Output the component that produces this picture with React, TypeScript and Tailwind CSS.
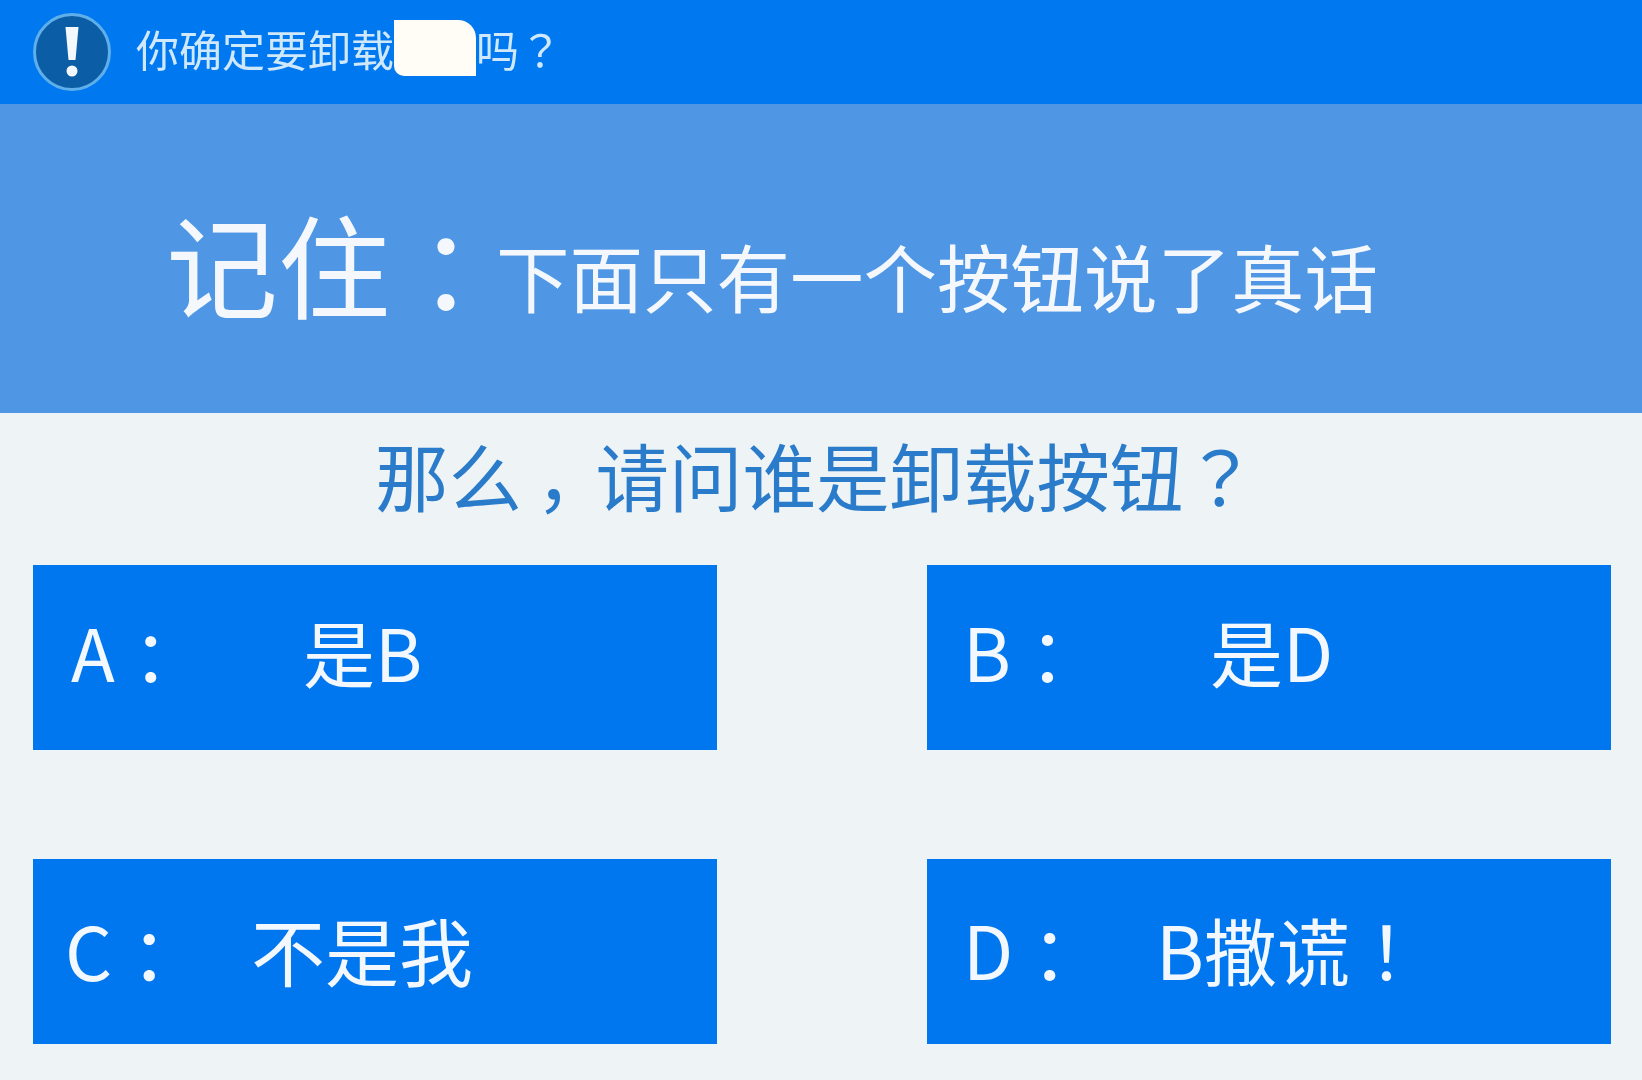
const font = "font-['Noto_Sans_CJK_SC','Noto_Sans',sans-serif]";

// TC cut of the font centres the full-width punctuation like the screenshot
const Punct = ({ children }: { children: string }) => (
  <span className="font-['Noto_Sans_CJK_TC',sans-serif]">{children}</span>
);

// the colon sits a little lower in the picture
const Colon = () => (
  <span className="inline-block translate-y-[0.05em] font-['Noto_Sans_CJK_TC',sans-serif]">：</span>
);

const options = [
  { label: "A", value: "是B", mark: "", box: "pl-[38px] pb-[14px] text-[72px]", width: "w-[232px]" },
  { label: "B", value: "是D", mark: "", box: "pl-[36px] pb-[14px] text-[73px]", width: "w-[247px]" },
  { label: "C", value: "不是我", mark: "", box: "pl-[32px] pb-[6px] text-[74px]", width: "w-[186px]" },
  { label: "D", value: "B撒谎", mark: "！", box: "pl-[36px] pb-[6px] text-[73px]", width: "w-[193px]" },
];

const App = () => {
  return (
    <div className={`${font} flex h-[1080px] w-[1642px] flex-col overflow-hidden bg-[#eef3f5]`}>
      {/* HEADER */}
      <div className="flex h-[104px] items-center bg-[#0078f0] pl-[32px] text-[#cfe8fb]">
        <svg width="80" height="80" viewBox="0 0 80 80" className="shrink-0">
          <circle cx="40" cy="40" r="37.5" fill="#0b5da5" stroke="#5fb0ea" strokeWidth="3" />
          <path d="M33.5 15h13l-3 33h-7z" fill="#f2f8fc" />
          <circle cx="40" cy="59" r="5.5" fill="#f2f8fc" />
        </svg>
        <div className="ml-[24px] flex items-center text-[43px] leading-none blur-[0.5px]">
          <span className="pb-[8px]">你确定要卸载</span>
          <div className="mb-[8px] h-[56px] w-[82px] rounded-tr-[18px] rounded-bl-[10px] bg-[#fffdf6]" />
          <span className="pb-[8px]">
            吗<Punct>？</Punct>
          </span>
        </div>
      </div>

      {/* BANNER */}
      <div className="flex h-[309px] items-center bg-[#4f97e4] pl-[166px] pt-[6px] text-[#f4f8fd] blur-[0.5px]">
        <span className="text-[112px] leading-none">
          记住
          <Colon />
        </span>
        <span className="ml-[-6px] pt-[28px] text-[73.5px] leading-none">下面只有一个按钮说了真话</span>
      </div>

      {/* QUESTION */}
      <div className="flex h-[152px] items-center justify-center pb-[28px] pr-[10px] text-[73.5px] leading-none text-[#2a7ccb] blur-[0.5px]">
        <span>
          那么
          <span className="inline-block w-[1em] text-center [font-feature-settings:'palt']">，</span>
          请问谁是卸载按钮
          <Punct>？</Punct>
        </span>
      </div>

      {/* OPTIONS */}
      <div className="grid grid-cols-[684px_684px] justify-between gap-y-[109px] pl-[33px] pr-[31px]">
        {options.map((o) => (
          <div key={o.label} className={`flex h-[185px] items-center bg-[#0076ef] ${o.box} leading-none text-[#f2f8fd]`}>
            <span className={`${o.width} shrink-0 blur-[0.5px]`}>
              {o.label}
              <Colon />
            </span>
            <span className="blur-[0.5px]">
              {o.value}
              {o.mark && <Punct>{o.mark}</Punct>}
            </span>
          </div>
        ))}
      </div>
    </div>
  );
};

export default App;
